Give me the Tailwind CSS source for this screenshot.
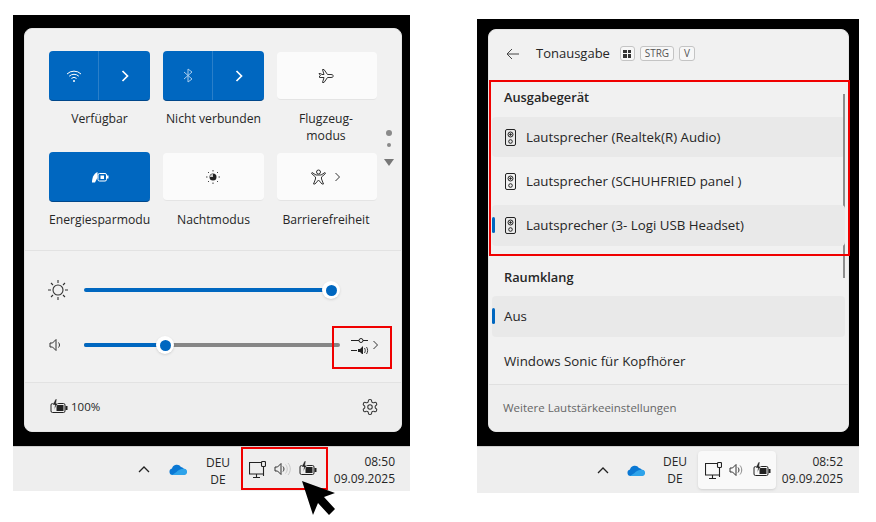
<!DOCTYPE html>
<html lang="de">
<head>
    <meta charset="UTF-8">
    <title>Schnelleinstellungen</title>
    <script src="https://cdn.jsdelivr.net/npm/@tailwindcss/browser@4"></script>
</head>
<body class="bg-white font-['Open_Sans','Noto_Sans',sans-serif] text-[#262626] overflow-hidden">
<div class="relative flex w-[876px] h-[522px] pl-[13px] overflow-hidden">

    <!-- linke Seite: Schnelleinstellungen -->
    <div class="w-[397px] pt-[15px] shrink-0">
        <div class="bg-black h-[431px] pl-[11px] pr-[8px] pt-[13px]">
            <div class="relative h-[404px] bg-[#f1f1f1] rounded-lg border border-[#e4e4e4] flex flex-col">
                <div class="h-[222px] shrink-0 pl-[24px] pt-[22px] border-b border-[#e2e2e2]">
                    <div class="grid grid-cols-[101px_101px_100px] gap-x-[13px]">
                        <div class="h-[50px] bg-[#0067c0] rounded-[4px] border-b border-[#00478a] flex">
                            <div class="w-[50px] flex items-center justify-center border-r border-[#2a7fc9]">
                                <svg width="16" height="14" viewBox="0 0 16 14" fill="none" stroke="#fff" stroke-width="1"><path d="M1 5a10 10 0 0 1 14 0M3.2 7.2a7 7 0 0 1 9.6 0M5.4 9.4a4 4 0 0 1 5.2 0"/><circle cx="8" cy="12" r="1" fill="#fff" stroke="none"/></svg>
                            </div>
                            <div class="flex-1 flex items-center justify-center">
                                <svg width="10" height="12" viewBox="0 0 10 12" fill="none" stroke="#fff" stroke-width="1.7"><path d="M2.5 1l5 5-5 5"/></svg>
                            </div>
                        </div>
                        <div class="h-[50px] bg-[#0067c0] rounded-[4px] border-b border-[#00478a] flex">
                            <div class="w-[50px] flex items-center justify-center border-r border-[#2a7fc9]">
                                <svg width="10" height="15" viewBox="0 0 10 15" fill="none" stroke="#a9cdee" stroke-width="1"><path d="M1 4l8 7-4 3V1l4 3-8 7"/></svg>
                            </div>
                            <div class="flex-1 flex items-center justify-center">
                                <svg width="10" height="12" viewBox="0 0 10 12" fill="none" stroke="#fff" stroke-width="1.7"><path d="M2.5 1l5 5-5 5"/></svg>
                            </div>
                        </div>
                        <div class="h-[48px] mt-px bg-[#fbfbfb] rounded-[4px] border-b border-[#e4e4e4] flex items-center justify-center pr-[2px]">
                            <svg width="16" height="16" viewBox="0 0 16 16" fill="none" stroke="#333" stroke-width="1"><path d="M1 5.500l1.500 2-1 .5 0 1.500L4 9.500h2l-1.500 5h1.500L9.500 9.500h3.500c2 0 2.500-1.500 2.500-1.500s-.5-1.500-2.500-1.500H9.500L6 1.500H4.500L6 6.500H4L2.500 5.500z"/></svg>
                        </div>

                        <div class="text-[12.200px] leading-[17px] text-center pt-[9px] h-[51px]">Verfügbar</div>
                        <div class="text-[12.200px] leading-[17px] text-center pt-[9px] h-[51px]">Nicht verbunden</div>
                        <div class="text-[12.200px] leading-[17px] text-center pt-[9px] h-[51px] pr-[2px]">Flugzeug-<br>modus</div>

                        <div class="h-[50px] bg-[#0067c0] rounded-[4px] border-b border-[#00478a] flex items-center justify-center">
                            <svg width="18" height="12" viewBox="0 0 18 12" fill="none"><path d="M1 11.500C1 7 2.500 3 6.500 1v5.500L4 11.500z" fill="#fff"/><rect x="7" y="2.500" width="8.500" height="7.500" rx="1.500" stroke="#fff"/><rect x="9.500" y="4.500" width="3.500" height="3.500" fill="#fff"/><rect x="16" y="4.500" width="1.500" height="3" fill="#fff"/></svg>
                        </div>
                        <div class="h-[48px] mt-px bg-[#fbfbfb] rounded-[4px] border-b border-[#e4e4e4] flex items-center justify-center pr-[2px]">
                            <svg width="16" height="16" viewBox="0 0 16 16"><circle cx="8" cy="8" r="3.500" fill="#222"/><path d="M8 5a3 3 0 0 0-3 3h3z" fill="#ccc"/><path d="M8 1v1.500M8 13.500V15M1 8h1.500M13.500 8H15M3 3l1 1M12 12l1 1M3 13l1-1M12 4l1-1" stroke="#444" stroke-width="1"/></svg>
                        </div>
                        <div class="h-[48px] mt-px bg-[#fbfbfb] rounded-[4px] border-b border-[#e4e4e4] flex items-center justify-center gap-[8px] pr-[2px]">
                            <svg width="15" height="16" viewBox="0 0 15 16" fill="none" stroke="#333" stroke-width="1"><circle cx="7.500" cy="3" r="2"/><path d="M1 3.500l4 2.500h5l4-2.500.5 1L10.500 8v2l2 5h-1.500L7.500 11 4 15H2.500l2-5V8L.5 4.500z"/></svg>
                            <svg width="7" height="10" viewBox="0 0 7 10" fill="none" stroke="#333" stroke-width="1"><path d="M1.500 1l4 4-4 4"/></svg>
                        </div>

                        <div class="text-[12.200px] leading-[17px] text-center pt-[9px] whitespace-nowrap overflow-hidden">Energiesparmodu</div>
                        <div class="text-[12.200px] leading-[17px] text-center pt-[9px]">Nachtmodus</div>
                        <div class="text-[12.200px] leading-[17px] text-center pt-[9px] whitespace-nowrap pr-[2px]">Barrierefreiheit</div>
                    </div>
                </div>

                <!-- Seitenpunkte -->
                <div class="absolute left-[359px] top-[101px] flex flex-col items-center">
                    <div class="w-[6px] h-[6px] rounded-full bg-[#8a8a8a]"></div>
                    <div class="w-[4px] h-[4px] mt-[7px] rounded-full bg-[#8a8a8a]"></div>
                    <div class="w-0 h-0 mt-[12px] border-x-[5px] border-x-transparent border-t-[7px] border-t-[#777]"></div>
                </div>

                <div class="h-[132px] shrink-0 pl-[24px] pr-[10px] pt-[27px] border-b border-[#e2e2e2]">
                    <div class="flex items-center h-[24px]">
                        <svg class="ml-[-2px] mr-[15px] shrink-0" width="22" height="22" viewBox="0 0 22 22" fill="none" stroke="#333" stroke-width="1.100"><circle cx="11" cy="11" r="5"/><path d="M11 1v3M11 18v3M1 11h3M18 11h3M4 4l2 2M16 16l2 2M4 18l2-2M16 6l2-2"/></svg>
                        <div class="relative w-[247px] h-[4px] bg-[#0067c0] rounded-full">
                            <div class="absolute right-[-9px] top-[-7px] w-[18px] h-[18px] bg-white rounded-full shadow-sm flex items-center justify-center"><div class="w-[11px] h-[11px] bg-[#0067c0] rounded-full"></div></div>
                        </div>
                    </div>
                    <div class="flex items-center h-[24px] mt-[31px]">
                        <svg class="mr-[21px] shrink-0" width="14" height="14" viewBox="0 0 14 14" fill="none" stroke="#333" stroke-width="1"><path d="M1 5h2.500L7 1.500v11L3.500 9H1zM9.500 4.500c1.300 1.500 1.300 3.500 0 5"/></svg>
                        <div class="relative w-[256px] h-[4px] bg-[#868686] rounded-full shrink-0">
                            <div class="w-[81px] h-[4px] bg-[#0067c0] rounded-l-full"></div>
                            <div class="absolute left-[72px] top-[-7px] w-[18px] h-[18px] bg-white rounded-full shadow-sm flex items-center justify-center"><div class="w-[11px] h-[11px] bg-[#0067c0] rounded-full"></div></div>
                        </div>
                        <svg class="ml-[11px] shrink-0" width="18" height="18" viewBox="0 0 18 18" fill="none" stroke="#222" stroke-width="1"><path d="M0 4.500h8M12 4.500h5M0 14.500h6"/><circle cx="10" cy="4.500" r="2"/><path d="M7 13h2l3-3v9l-3-3H7z" fill="#222" stroke="none"/><path d="M13.500 12c1 1.500 1 3.500 0 5M15.500 11c1.500 2 1.500 5 0 7" stroke-width=".9"/></svg>
                        <svg class="ml-[3px] shrink-0" width="7" height="10" viewBox="0 0 7 10" fill="none" stroke="#333" stroke-width="1"><path d="M1.500 1l4 4-4 4"/></svg>
                    </div>
                </div>

                <div class="flex-1 bg-[#eeeeee] rounded-b-lg pl-[25px] pr-[22px] flex items-center justify-between">
                    <div class="flex items-center gap-[3px] text-[11.500px]">
                        <svg class="mt-[-2px]" width="18" height="15" viewBox="0 0 18 15"><rect x="1" y="4.500" width="14" height="9" rx="1.500" fill="none" stroke="#222"/><rect x="6.500" y="6" width="7" height="6" fill="#222"/><rect x="15.500" y="7" width="2" height="4" fill="#222"/><path d="M5.500 0L2.500 6H5L4 10.500 8 4.500H6L7 0z" fill="#222" stroke="#eeeeee" stroke-width=".5"/></svg>
                        <span>100%</span>
                    </div>
                    <svg width="18" height="18" viewBox="0 0 24 24" fill="none" stroke="#333" stroke-width="1.400"><circle cx="12" cy="12" r="3"/><path d="M12.220 2h-.44a2 2 0 0 0-2 2v.18a2 2 0 0 1-1 1.730l-.43.250a2 2 0 0 1-2 0l-.15-.080a2 2 0 0 0-2.730.730l-.22.380a2 2 0 0 0 .730 2.730l.15.100a2 2 0 0 1 1 1.720v.510a2 2 0 0 1-1 1.740l-.15.090a2 2 0 0 0-.730 2.730l.22.380a2 2 0 0 0 2.730.730l.15-.080a2 2 0 0 1 2 0l.43.250a2 2 0 0 1 1 1.730V20a2 2 0 0 0 2 2h.44a2 2 0 0 0 2-2v-.18a2 2 0 0 1 1-1.730l.43-.250a2 2 0 0 1 2 0l.15.080a2 2 0 0 0 2.730-.730l.22-.390a2 2 0 0 0-.730-2.730l-.15-.080a2 2 0 0 1-1-1.740v-.500a2 2 0 0 1 1-1.740l.15-.090a2 2 0 0 0 .730-2.730l-.22-.380a2 2 0 0 0-2.730-.730l-.15.080a2 2 0 0 1-2 0l-.43-.250a2 2 0 0 1-1-1.730V4a2 2 0 0 0-2-2z"/></svg>
                </div>
            </div>
        </div>

        <!-- Taskleiste links -->
        <div class="h-[45px] bg-[#eeeeee] border-t border-[#d0d0d0] flex items-center text-[12px] leading-[17px]">
            <svg class="ml-[125px]" width="12" height="8" viewBox="0 0 12 8" fill="none" stroke="#222" stroke-width="1.300"><path d="M1 7l5-5 5 5"/></svg>
            <svg class="ml-[19px]" width="18" height="11" viewBox="0 0 18 11"><path d="M3.500 11a3.300 3.300 0 0 1-.5-6.500A5 5 0 0 1 12 3a3.600 3.600 0 0 1 2.500 1.500 3.300 3.300 0 0 1 0 6.500z" fill="#0a78d4"/><path d="M3 11h12a3 3 0 0 0 0-6.300C12 4.500 9 6 7.500 8z" fill="#2ea3ea"/></svg>
            <div class="ml-[9px] w-[44px] text-center pt-[3px]">DEU<br>DE</div>
            <div class="ml-[9px] flex items-center">
                <svg width="17" height="17" viewBox="0 0 17 17" fill="none" stroke="#222" stroke-width="1.100"><path d="M12 1.500H.5V13H14M4 16.500h7M7.500 13v3.500"/><rect x="12.500" y=".5" width="4" height="5" rx="1"/><path d="M14.500 5.500V15"/></svg>
                <svg class="ml-[8px]" width="18" height="14" viewBox="0 0 18 14" fill="none" stroke="#333" stroke-width="1"><path d="M1 5h2.500L7 1.500v11L3.500 9H1zM9 4.500c1.300 1.500 1.300 3.500 0 5"/><path d="M11.500 2.500c2.300 2.700 2.300 6.300 0 9M14 1c3 3.500 3 8.500 0 12" stroke="#c8c8c8"/></svg>
                <svg class="ml-[7px] mt-[-2px]" width="18" height="15" viewBox="0 0 18 15"><rect x="1" y="4.500" width="14" height="9" rx="1.500" fill="none" stroke="#222"/><rect x="6.500" y="6" width="7" height="6" fill="#222"/><rect x="15.500" y="7" width="2" height="4" fill="#222"/><path d="M5.500 0L2.500 6H5L4 10.500 8 4.500H6L7 0z" fill="#222" stroke="#eeeeee" stroke-width=".5"/></svg>
            </div>
            <div class="ml-auto pr-[15px] text-right pt-[1px]">08:50<br>09.09.2025</div>
        </div>
    </div>

    <!-- rechte Seite: Tonausgabe -->
    <div class="w-[382px] ml-[67px] pt-[19px] shrink-0">
        <div class="bg-black h-[427px] pl-[11px] pr-[10px] pt-[10px]">
            <div class="h-[403px] bg-[#f1f1f1] rounded-lg border border-[#e4e4e4] flex flex-col relative">
                <div class="h-[47px] shrink-0 flex items-center pl-[17px]">
                    <svg width="14" height="12" viewBox="0 0 14 12" fill="none" stroke="#444" stroke-width="1"><path d="M13 6H1M6 1L1 6l5 5"/></svg>
                    <span class="ml-[16px] text-[13px]">Tonausgabe</span>
                    <div class="ml-[10px] w-[15px] h-[15px] border border-[#c4c4c4] rounded-[3px] bg-[#f7f7f7] grid grid-cols-2 gap-px p-[2.500px]">
                        <div class="bg-[#333]"></div><div class="bg-[#333]"></div><div class="bg-[#333]"></div><div class="bg-[#333]"></div>
                    </div>
                    <div class="ml-[5px] h-[15px] w-[34px] border border-[#c4c4c4] rounded-[3px] bg-[#f7f7f7] text-[10px] leading-[13px] text-center text-[#555]">STRG</div>
                    <div class="ml-[5px] h-[15px] w-[16px] border border-[#c4c4c4] rounded-[3px] bg-[#f7f7f7] text-[10px] leading-[13px] text-center text-[#555]">V</div>
                </div>

                <div class="absolute right-[3px] top-[64px] w-[2px] h-[184px] bg-[#8d8d8d]"></div>

                <div class="pl-[15px] pt-[2px] text-[12.800px] font-semibold h-[40px] flex items-center shrink-0">Ausgabegerät</div>
                <div class="ml-[3px] mr-[3px] space-y-[4px] text-[13.300px]">
                    <div class="h-[40px] bg-[#e9e9e9] rounded flex items-center pl-[13px] gap-[10px]">
                        <svg width="11" height="17" viewBox="0 0 11 17" fill="none" stroke="#222" stroke-width="1"><rect x=".5" y=".5" width="10" height="16" rx="1.500"/><circle cx="5.500" cy="5.500" r="2.500"/><circle cx="5.500" cy="5.500" r=".8" fill="#222"/><circle cx="5.500" cy="12.500" r="1.800"/></svg>
                        <span class="pt-[2px]">Lautsprecher (Realtek(R) Audio)</span>
                    </div>
                    <div class="h-[40px] rounded flex items-center pl-[13px] gap-[10px]">
                        <svg width="11" height="17" viewBox="0 0 11 17" fill="none" stroke="#222" stroke-width="1"><rect x=".5" y=".5" width="10" height="16" rx="1.500"/><circle cx="5.500" cy="5.500" r="2.500"/><circle cx="5.500" cy="5.500" r=".8" fill="#222"/><circle cx="5.500" cy="12.500" r="1.800"/></svg>
                        <span class="pt-[2px]">Lautsprecher (SCHUHFRIED panel )</span>
                    </div>
                    <div class="relative h-[41px] bg-[#e9e9e9] rounded flex items-center pl-[13px] gap-[10px]">
                        <div class="absolute left-0 top-[12px] w-[3px] h-[16px] bg-[#0067c0] rounded-full"></div>
                        <svg width="11" height="17" viewBox="0 0 11 17" fill="none" stroke="#222" stroke-width="1"><rect x=".5" y=".5" width="10" height="16" rx="1.500"/><circle cx="5.500" cy="5.500" r="2.500"/><circle cx="5.500" cy="5.500" r=".8" fill="#222"/><circle cx="5.500" cy="12.500" r="1.800"/></svg>
                        <span class="pt-[1px]">Lautsprecher (3- Logi USB Headset)</span>
                    </div>
                </div>
                <div class="pl-[15px] pt-[14px] text-[12.800px] font-semibold h-[50px] flex items-center shrink-0">Raumklang</div>
                <div class="relative mx-[3px] h-[41px] bg-[#e9e9e9] rounded flex items-center pl-[12px] text-[13.300px]">
                    <div class="absolute left-0 top-[12px] w-[3px] h-[16px] bg-[#0067c0] rounded-full"></div>
                    Aus
                </div>
                <div class="mx-[3px] mt-[4px] h-[40px] flex items-center pl-[12px] pt-[2px] text-[13.300px]">Windows Sonic für Kopfhörer</div>
                <div class="mt-[3px] flex-1 border-t border-[#e0e0e0] bg-[#eeeeee] rounded-b-lg flex items-center pl-[14px] text-[11.500px] text-[#666]">Weitere Lautstärkeeinstellungen</div>
            </div>
        </div>

        <!-- Taskleiste rechts -->
        <div class="h-[47px] bg-[#eeeeee] border-t border-[#d0d0d0] flex items-center text-[12px] leading-[17px]">
            <svg class="ml-[120px]" width="12" height="8" viewBox="0 0 12 8" fill="none" stroke="#222" stroke-width="1.300"><path d="M1 7l5-5 5 5"/></svg>
            <svg class="ml-[18px]" width="18" height="11" viewBox="0 0 18 11"><path d="M3.500 11a3.300 3.300 0 0 1-.5-6.500A5 5 0 0 1 12 3a3.600 3.600 0 0 1 2.500 1.500 3.300 3.300 0 0 1 0 6.500z" fill="#0a78d4"/><path d="M3 11h12a3 3 0 0 0 0-6.300C12 4.500 9 6 7.500 8z" fill="#2ea3ea"/></svg>
            <div class="ml-[9px] w-[42px] text-center">DEU<br>DE</div>
            <div class="ml-[2px] w-[78px] h-[38px] bg-[#f9f9f9] rounded-[4px] shadow-sm flex items-center pl-[7px]">
                <svg width="17" height="17" viewBox="0 0 17 17" fill="none" stroke="#222" stroke-width="1.100"><path d="M12 1.500H.5V13H14M4 16.500h7M7.500 13v3.500"/><rect x="12.500" y=".5" width="4" height="5" rx="1"/><path d="M14.500 5.500V15"/></svg>
                <svg class="ml-[7px]" width="16" height="14" viewBox="0 0 16 14" fill="none" stroke="#333" stroke-width="1"><path d="M1 5h2.500L7 1.500v11L3.500 9H1zM9 4.500c1.300 1.500 1.300 3.500 0 5"/><path d="M11 2.500c2.300 2.700 2.300 6.300 0 9" stroke="#888"/></svg>
                <svg class="ml-[8px] mt-[-2px]" width="18" height="15" viewBox="0 0 18 15"><rect x="1" y="4.500" width="14" height="9" rx="1.500" fill="none" stroke="#222"/><rect x="6.500" y="6" width="7" height="6" fill="#222"/><rect x="15.500" y="7" width="2" height="4" fill="#222"/><path d="M5.500 0L2.500 6H5L4 10.500 8 4.500H6L7 0z" fill="#222" stroke="#f9f9f9" stroke-width=".5"/></svg>
            </div>
            <div class="ml-auto pr-[16px] text-right">08:52<br>09.09.2025</div>
        </div>
    </div>

    <!-- rote Markierungen -->
    <div class="absolute left-[332px] top-[326px] w-[60px] h-[43px] border-2 border-[#f00000]"></div>
    <div class="absolute left-[241px] top-[447px] w-[87px] h-[43px] border-2 border-[#f00000]"></div>
    <div class="absolute left-[489px] top-[80px] w-[361px] h-[176px] border-2 border-[#f00000]"></div>

    <!-- Mauszeiger -->
    <svg class="absolute left-[301px] top-[480px]" width="35" height="36" viewBox="0 0 35 36"><path d="M1 1l33 12-11 4 11 12-6 6-11-12-5 12z" fill="#000"/></svg>
</div>
</body>
</html>
